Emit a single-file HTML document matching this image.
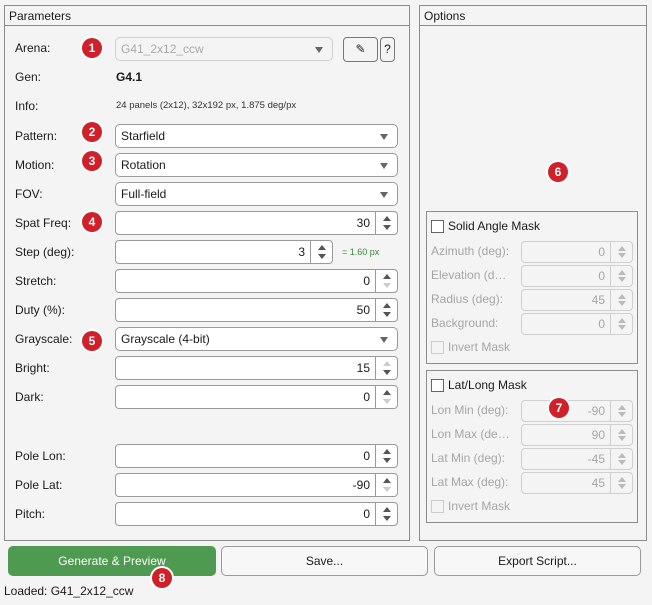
<!DOCTYPE html>
<html><head><meta charset="utf-8"><style>
*{box-sizing:border-box}
body{margin:0;width:652px;height:605px;background:#f4f4f4;font-family:"Liberation Sans",sans-serif;font-size:12px;color:#1a1a1a;position:relative;overflow:hidden}
.a{position:absolute}
.panel{position:absolute;border:1px solid #8c8c8c}
.ph{position:absolute;left:0;right:0;top:0;height:20px;border-bottom:1px solid #8c8c8c;padding:3px 0 0 4px;font-size:12px}
.lbl{position:absolute;left:15px;font-size:12px}
.box{position:absolute;background:#fff;border:1px solid #9a9a9a;border-radius:4px;height:24px}
.dd{position:absolute;background:#fff;border:1px solid #9a9a9a;border-radius:5px;height:24px;padding:4px 0 0 5px;font-size:12px}
.dd:after{content:"";position:absolute;right:9px;top:9px;border-left:4px solid transparent;border-right:4px solid transparent;border-top:6px solid #666}
.num{position:absolute;right:27px;top:4px}
.sp{position:absolute;right:0;top:0;bottom:0;width:22px;border-left:1px solid #9a9a9a}
.sp:before,.sp:after{content:"";position:absolute;left:7px;border-left:4px solid transparent;border-right:4px solid transparent}
.sp:before{top:4px;border-bottom:5px solid #555}
.sp:after{bottom:4px;border-top:5px solid #555}
.sp.nd:after{border-top-color:#ccc}.sp.nu:before{border-bottom-color:#ccc}
.dis{color:#a6a6a6}
.box.d{border-color:#cfcfcf;background:#f4f4f4}
.box.d .sp{border-color:#cfcfcf}
.box.d .sp:before{border-bottom-color:#bbb}.box.d .sp:after{border-top-color:#bbb}
.badge{position:absolute;width:20px;height:20px;border-radius:50%;background:#d0202a;color:#fff;font-weight:bold;font-size:12px;text-align:center;line-height:20px;box-shadow:0 0 0 2px #fff}
.cb{position:absolute;width:13px;height:13px;border:1px solid #666;background:#fff}
.btn{position:absolute;top:546px;height:30px;border:1px solid #9a9a9a;border-radius:5px;background:#f7f7f7;text-align:center;line-height:28px;font-size:12px}
</style></head><body>

<div class="panel" style="left:4px;top:5px;width:406px;height:536px"><div class="ph">Parameters</div></div>
<div class="panel" style="left:419px;top:5px;width:228px;height:536px"><div class="ph">Options</div></div>

<div class="lbl" style="top:41px">Arena:</div>
<div class="dd" style="left:115px;top:37px;width:218px;color:#aaa;border-color:#d0d0d0;background:#f4f4f4">G41_2x12_ccw</div>
<div class="a" style="left:343px;top:37px;width:35px;height:25px;border:1px solid #777;border-radius:4px;text-align:center;line-height:22px;font-size:12px">&#9998;</div>
<div class="a" style="left:380px;top:37px;width:15px;height:25px;border:1px solid #777;border-radius:4px;text-align:center;line-height:23px;font-size:12px">?</div>

<div class="lbl" style="top:70px">Gen:</div>
<div class="a" style="left:116px;top:70px;font-weight:bold">G4.1</div>
<div class="lbl" style="top:99px">Info:</div>
<div class="a" style="left:116px;top:100px;font-size:9.5px;color:#333">24 panels (2x12), 32x192 px, 1.875 deg/px</div>

<div class="lbl" style="top:129px">Pattern:</div>
<div class="dd" style="left:115px;top:124px;width:283px">Starfield</div>
<div class="lbl" style="top:158px">Motion:</div>
<div class="dd" style="left:115px;top:153px;width:283px">Rotation</div>
<div class="lbl" style="top:187px">FOV:</div>
<div class="dd" style="left:115px;top:182px;width:283px">Full-field</div>

<div class="lbl" style="top:216px">Spat Freq:</div>
<div class="box" style="left:115px;top:211px;width:283px"><span class="num">30</span><div class="sp"></div></div>
<div class="lbl" style="top:245px">Step (deg):</div>
<div class="box" style="left:115px;top:240px;width:218px"><span class="num">3</span><div class="sp"></div></div>
<div class="a" style="left:342px;top:247px;font-size:9px;color:#3a8a3a">= 1.60 px</div>
<div class="lbl" style="top:274px">Stretch:</div>
<div class="box" style="left:115px;top:269px;width:283px"><span class="num">0</span><div class="sp nd"></div></div>
<div class="lbl" style="top:303px">Duty (%):</div>
<div class="box" style="left:115px;top:298px;width:283px"><span class="num">50</span><div class="sp"></div></div>
<div class="lbl" style="top:332px">Grayscale:</div>
<div class="dd" style="left:115px;top:327px;width:283px">Grayscale (4-bit)</div>
<div class="lbl" style="top:361px">Bright:</div>
<div class="box" style="left:115px;top:356px;width:283px"><span class="num">15</span><div class="sp nu"></div></div>
<div class="lbl" style="top:390px">Dark:</div>
<div class="box" style="left:115px;top:385px;width:283px"><span class="num">0</span><div class="sp nd"></div></div>
<div class="lbl" style="top:449px">Pole Lon:</div>
<div class="box" style="left:115px;top:444px;width:283px"><span class="num">0</span><div class="sp"></div></div>
<div class="lbl" style="top:478px">Pole Lat:</div>
<div class="box" style="left:115px;top:473px;width:283px"><span class="num">-90</span><div class="sp nd"></div></div>
<div class="lbl" style="top:507px">Pitch:</div>
<div class="box" style="left:115px;top:502px;width:283px"><span class="num">0</span><div class="sp"></div></div>

<div class="a" style="left:426px;top:211px;width:212px;height:153px;border:1px solid #8c8c8c"></div>
<div class="cb" style="left:431px;top:220px"></div>
<div class="a" style="left:448px;top:219px">Solid Angle Mask</div>
<div class="dis">
<div class="a" style="left:431px;top:244px">Azimuth (deg):</div>
<div class="box d" style="left:521px;top:241px;width:112px;height:22px"><span class="num" style="top:3px">0</span><div class="sp"></div></div>
<div class="a" style="left:431px;top:268px">Elevation (d…</div>
<div class="box d" style="left:521px;top:265px;width:112px;height:22px"><span class="num" style="top:3px">0</span><div class="sp"></div></div>
<div class="a" style="left:431px;top:292px">Radius (deg):</div>
<div class="box d" style="left:521px;top:289px;width:112px;height:22px"><span class="num" style="top:3px">45</span><div class="sp"></div></div>
<div class="a" style="left:431px;top:316px">Background:</div>
<div class="box d" style="left:521px;top:313px;width:112px;height:22px"><span class="num" style="top:3px">0</span><div class="sp"></div></div>
<div class="cb" style="left:431px;top:341px;border-color:#ccc;background:#f4f4f4"></div>
<div class="a" style="left:448px;top:340px">Invert Mask</div>
</div>

<div class="a" style="left:426px;top:370px;width:212px;height:153px;border:1px solid #8c8c8c"></div>
<div class="cb" style="left:431px;top:379px"></div>
<div class="a" style="left:448px;top:378px">Lat/Long Mask</div>
<div class="dis">
<div class="a" style="left:431px;top:403px">Lon Min (deg):</div>
<div class="box d" style="left:521px;top:400px;width:112px;height:22px"><span class="num" style="top:3px">-90</span><div class="sp"></div></div>
<div class="a" style="left:431px;top:427px">Lon Max (de…</div>
<div class="box d" style="left:521px;top:424px;width:112px;height:22px"><span class="num" style="top:3px">90</span><div class="sp"></div></div>
<div class="a" style="left:431px;top:451px">Lat Min (deg):</div>
<div class="box d" style="left:521px;top:448px;width:112px;height:22px"><span class="num" style="top:3px">-45</span><div class="sp"></div></div>
<div class="a" style="left:431px;top:475px">Lat Max (deg):</div>
<div class="box d" style="left:521px;top:472px;width:112px;height:22px"><span class="num" style="top:3px">45</span><div class="sp"></div></div>
<div class="cb" style="left:431px;top:500px;border-color:#ccc;background:#f4f4f4"></div>
<div class="a" style="left:448px;top:499px">Invert Mask</div>
</div>

<div class="btn" style="left:8px;width:208px;background:#4f9a51;border-color:#4f9a51;color:#fff">Generate &amp; Preview</div>
<div class="btn" style="left:221px;width:207px">Save...</div>
<div class="btn" style="left:434px;width:207px">Export Script...</div>
<div class="a" style="left:4px;top:584px">Loaded: G41_2x12_ccw</div>

<div class="badge" style="left:82px;top:38px">1</div>
<div class="badge" style="left:82px;top:122px">2</div>
<div class="badge" style="left:82px;top:151px">3</div>
<div class="badge" style="left:82px;top:212px">4</div>
<div class="badge" style="left:82px;top:331px">5</div>
<div class="badge" style="left:548px;top:162px">6</div>
<div class="badge" style="left:549px;top:398px">7</div>
<div class="badge" style="left:152px;top:568px">8</div>
</body></html>
